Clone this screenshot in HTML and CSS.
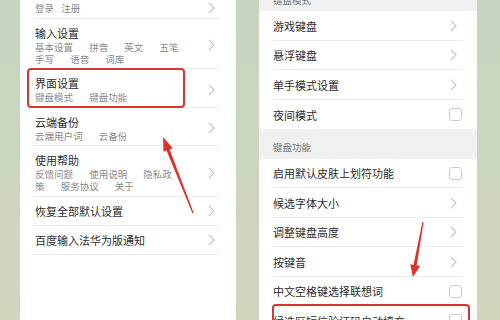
FILE: index.html
```html
<!DOCTYPE html>
<html lang="zh-CN">
<head>
<meta charset="utf-8">
<title>设置</title>
<link rel="stylesheet" href="styles.css">
</head>
<body>
<div class="stage">
  <section class="panel panel-left">
    <div class="item item-cut">
      <div class="item-text">
        <div class="sub sub-tight">登录 注册</div>
      </div>
      <svg class="chev" viewBox="0 0 7 12"><polyline points="1,1 6,6 1,11"/></svg>
    </div>
    <div class="item">
      <div class="item-text">
        <div class="title">输入设置</div>
        <div class="sub">基本设置 拼音 英文 五笔 手写 语音 词库</div>
      </div>
      <svg class="chev" viewBox="0 0 7 12"><polyline points="1,1 6,6 1,11"/></svg>
    </div>
    <div class="item">
      <div class="item-text">
        <div class="title">界面设置</div>
        <div class="sub">键盘模式 键盘功能</div>
      </div>
      <svg class="chev" viewBox="0 0 7 12"><polyline points="1,1 6,6 1,11"/></svg>
    </div>
    <div class="item">
      <div class="item-text">
        <div class="title">云端备份</div>
        <div class="sub">云端用户词 云备份</div>
      </div>
      <svg class="chev" viewBox="0 0 7 12"><polyline points="1,1 6,6 1,11"/></svg>
    </div>
    <div class="item">
      <div class="item-text">
        <div class="title">使用帮助</div>
        <div class="sub">反馈问题 使用说明 隐私政策 服务协议 关于</div>
      </div>
      <svg class="chev" viewBox="0 0 7 12"><polyline points="1,1 6,6 1,11"/></svg>
    </div>
    <div class="item item-single">
      <div class="item-text">
        <div class="title">恢复全部默认设置</div>
      </div>
      <svg class="chev" viewBox="0 0 7 12"><polyline points="1,1 6,6 1,11"/></svg>
    </div>
    <div class="item item-single">
      <div class="item-text">
        <div class="title">百度输入法华为版通知</div>
      </div>
      <svg class="chev" viewBox="0 0 7 12"><polyline points="1,1 6,6 1,11"/></svg>
    </div>
    <div class="mark mark-left"></div>
  </section>

  <section class="panel panel-right">
    <div class="group group-cut">键盘模式</div>
    <div class="row"><span>游戏键盘</span><svg class="chev chev-r" viewBox="0 0 7 12"><polyline points="1,1 6,6 1,11"/></svg></div>
    <div class="row"><span>悬浮键盘</span><svg class="chev chev-r" viewBox="0 0 7 12"><polyline points="1,1 6,6 1,11"/></svg></div>
    <div class="row"><span>单手模式设置</span><svg class="chev chev-r" viewBox="0 0 7 12"><polyline points="1,1 6,6 1,11"/></svg></div>
    <div class="row row-last"><span>夜间模式</span><span class="check"></span></div>
    <div class="group">键盘功能</div>
    <div class="row"><span>启用默认皮肤上划符功能</span><span class="check"></span></div>
    <div class="row"><span>候选字体大小</span><svg class="chev chev-r" viewBox="0 0 7 12"><polyline points="1,1 6,6 1,11"/></svg></div>
    <div class="row"><span>调整键盘高度</span><svg class="chev chev-r" viewBox="0 0 7 12"><polyline points="1,1 6,6 1,11"/></svg></div>
    <div class="row"><span>按键音</span><svg class="chev chev-r" viewBox="0 0 7 12"><polyline points="1,1 6,6 1,11"/></svg></div>
    <div class="row"><span>中文空格键选择联想词</span><span class="check"></span></div>
    <div class="row"><span>候选区短信验证码自动填充</span><span class="check"></span></div>
    <div class="mark mark-right"></div>
  </section>

  <svg class="arrows" viewBox="0 0 500 320">
    <polygon points="163,137 172.8,148.2 169.7,149.4 193.6,212.8 192.4,213.2 166.5,150.6 163.5,151.8"/>
    <polygon points="413,277 410.2,264.3 413.5,264.9 422.4,221.9 423.6,222.1 416.7,265.5 420.1,266.1"/>
  </svg>
</div>
</body>
</html>
```

FILE: styles.css
```css
* { box-sizing: border-box; }

html, body {
  margin: 0;
  padding: 0;
}

body {
  width: 500px;
  height: 320px;
  overflow: hidden;
  font-family: "Noto Sans CJK SC", "Noto Sans", sans-serif;
  background: linear-gradient(to bottom, #c6d6c0 0%, #cbd6c0 50%, #d4d3bc 100%);
}

.stage {
  position: relative;
  width: 500px;
  height: 320px;
  display: flex;
  padding-left: 20px;
  gap: 23px;
  overflow: hidden;
}

.panel {
  position: relative;
  background: #ffffff;
  height: 320px;
  overflow: hidden;
}

.panel-left { width: 216px; }
.panel-right { width: 218px; }

/* left list */
.item {
  display: flex;
  align-items: center;
  justify-content: space-between;
  margin: 0 16px 0 13px;
  padding: 7px 5px 3.5px 2px;
  border-bottom: 1px solid #ececec;
}

.item-cut {
  margin-top: -21px;
  padding-top: 22px;
}

.item-single {
  padding-top: 7px;
  padding-bottom: 7px;
}

.title {
  font-size: 11px;
  line-height: 14px;
  color: #2e2e2e;
}

.sub {
  margin-top: 1px;
  width: 144px;
  font-size: 9.5px;
  line-height: 12px;
  color: #8a8a8a;
  word-spacing: 14px;
}

.sub-tight { word-spacing: 5px; }

.chev {
  width: 7px;
  height: 12px;
  flex: none;
  fill: none;
  stroke: #c4c4c4;
  stroke-width: 1.1;
}

/* right list */
.group {
  height: 29.5px;
  padding: 12px 0 0 14px;
  background: #f0f0f0;
  font-size: 9.5px;
  line-height: 12px;
  color: #777777;
}

.group-cut { margin-top: -18.5px; }

.row {
  height: 29.5px;
  margin: 0 14px;
  padding-top: 1px;
  display: flex;
  align-items: center;
  justify-content: space-between;
  border-bottom: 1px solid #ececec;
  font-size: 11px;
  color: #2e2e2e;
}

.row-last { border-bottom: none; }

.chev-r { margin-right: 6px; }

.check {
  width: 13px;
  height: 13px;
  margin-right: 1px;
  border: 1px solid #cdcdcd;
  border-radius: 3px;
  background: #ffffff;
}

/* annotations */
.mark {
  position: absolute;
  border: 2px solid #d9362f;
  border-radius: 4px;
}

.mark-left {
  left: 7px;
  top: 68px;
  width: 158px;
  height: 40px;
}

.mark-right {
  left: 13px;
  top: 304px;
  width: 198px;
  height: 40px;
}

.arrows {
  position: absolute;
  left: 0;
  top: 0;
  width: 500px;
  height: 320px;
  fill: #e0322b;
  pointer-events: none;
}
```
